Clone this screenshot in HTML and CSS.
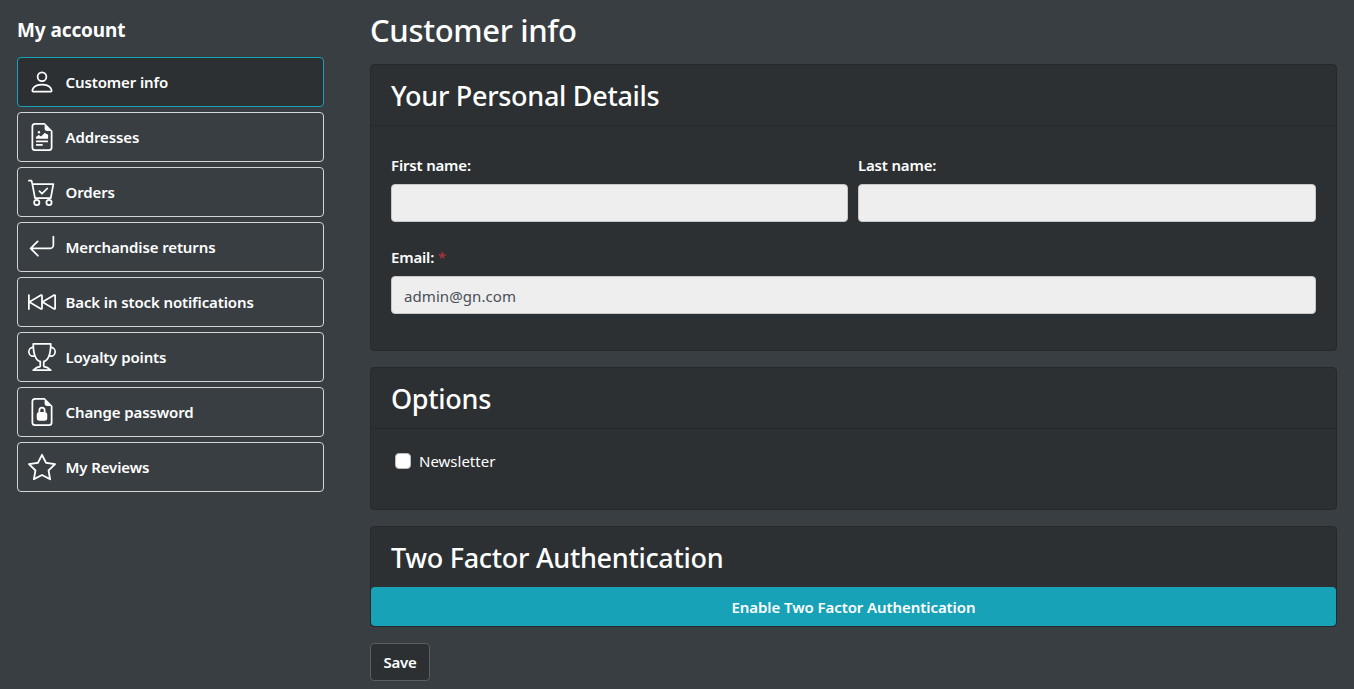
FILE: index.html
```html
<!DOCTYPE html>
<html lang="en">
<head>
<meta charset="utf-8">
<title>Customer info</title>
<link rel="stylesheet" href="styles.css">
</head>
<body>
<div class="page">
  <aside class="side">
    <div class="side-title">My account</div>
    <nav class="menu">
      <a class="item active"><svg class="ico" viewBox="0 0 16 16"><path d="M8 8a3 3 0 1 0 0-6 3 3 0 0 0 0 6zm2-3a2 2 0 1 1-4 0 2 2 0 0 1 4 0zm4 8c0 1-1 1-1 1H3s-1 0-1-1 1-4 6-4 6 3 6 4zm-1-.004c-.001-.246-.154-.986-.832-1.664C11.516 10.68 10.289 10 8 10c-2.29 0-3.516.68-4.168 1.332-.678.678-.83 1.418-.832 1.664h10z"/></svg><span>Customer info</span></a>
      <a class="item"><svg class="ico" viewBox="0 0 16 16"><path d="M14 4.5V14a2 2 0 0 1-2 2H4a2 2 0 0 1-2-2V2a2 2 0 0 1 2-2h5.5L14 4.5zm-3 0A1.5 1.5 0 0 1 9.5 3V1H4a1 1 0 0 0-1 1v12a1 1 0 0 0 1 1h8a1 1 0 0 0 1-1V4.5h-2z"/><path d="M4.5 12.5A.5.5 0 0 1 5 12h3a.5.5 0 0 1 0 1H5a.5.5 0 0 1-.5-.5zm0-2A.5.5 0 0 1 5 10h6a.5.5 0 0 1 0 1H5a.5.5 0 0 1-.5-.5zm1.639-3.708 1.33.886 1.854-1.855a.25.25 0 0 1 .289-.047l1.888.974V8.5a.5.5 0 0 1-.5.5H5a.5.5 0 0 1-.5-.5V8s1.54-1.274 1.639-1.208zM6.25 6a.75.75 0 1 0 0-1.5.75.75 0 0 0 0 1.5z"/></svg><span>Addresses</span></a>
      <a class="item"><svg class="ico" viewBox="0 0 16 16"><path d="M11.354 6.354a.5.5 0 0 0-.708-.708L8 8.293 6.854 7.146a.5.5 0 1 0-.708.708l1.5 1.5a.5.5 0 0 0 .708 0l3-3z"/><path d="M.5 1a.5.5 0 0 0 0 1h1.11l.401 1.607 1.498 7.985A.5.5 0 0 0 4 12h1a2 2 0 1 0 0 4 2 2 0 0 0 0-4h7a2 2 0 1 0 0 4 2 2 0 0 0 0-4h1a.5.5 0 0 0 .491-.408l1.5-8A.5.5 0 0 0 14.5 3H2.89l-.405-1.621A.5.5 0 0 0 2 1H.5zm3.915 10L3.102 4h10.796l-1.313 7h-8.17zM6 14a1 1 0 1 1-2 0 1 1 0 0 1 2 0zm7 0a1 1 0 1 1-2 0 1 1 0 0 1 2 0z"/></svg><span>Orders</span></a>
      <a class="item"><svg class="ico" viewBox="0 0 16 16"><path fill-rule="evenodd" d="M14.5 1.5a.5.5 0 0 1 .5.5v4.8a2.5 2.5 0 0 1-2.5 2.5H2.707l3.347 3.346a.5.5 0 0 1-.708.708l-4.2-4.2a.5.5 0 0 1 0-.708l4-4a.5.5 0 1 1 .708.708L2.707 8.3H12.5A1.5 1.5 0 0 0 14 6.8V2a.5.5 0 0 1 .5-.5z"/></svg><span>Merchandise returns</span></a>
      <a class="item"><svg class="ico" viewBox="0 0 16 16"><path d="M.5 3.5A.5.5 0 0 1 1 4v3.248l6.267-3.636c.52-.302 1.233.043 1.233.696v2.94l6.267-3.636c.52-.302 1.233.043 1.233.696v7.384c0 .653-.713.998-1.233.696L8.5 8.752v2.94c0 .653-.713.998-1.233.696L1 8.752V12a.5.5 0 0 1-1 0V4a.5.5 0 0 1 .5-.5zm7 1.133L1.696 8 7.5 11.367V4.633zm7.5 0L9.196 8 15 11.367V4.633z"/></svg><span>Back in stock notifications</span></a>
      <a class="item"><svg class="ico" viewBox="0 0 16 16"><path d="M2.5.5A.5.5 0 0 1 3 0h10a.5.5 0 0 1 .5.5c0 .538-.012 1.05-.034 1.536a3 3 0 1 1-1.133 5.89c-.79 1.865-1.878 2.777-2.833 3.011v2.173l1.425.356c.194.048.377.135.537.255L13.3 15.1a.5.5 0 0 1-.3.9H3a.5.5 0 0 1-.3-.9l1.838-1.379c.16-.12.343-.207.537-.255L6.5 13.11v-2.173c-.955-.234-2.043-1.146-2.833-3.012a3 3 0 1 1-1.132-5.89A33.076 33.076 0 0 1 2.5.5zm.099 2.54a2 2 0 0 0 .72 3.935c-.333-1.05-.588-2.346-.72-3.935zm10.083 3.935a2 2 0 0 0 .72-3.935c-.133 1.59-.388 2.885-.72 3.935zM3.504 1c.007.517.026 1.006.056 1.469.13 2.028.457 3.546.87 4.667C5.294 9.48 6.484 10 7 10a.5.5 0 0 1 .5.5v2.61a1 1 0 0 1-.757.97l-1.426.356a.5.5 0 0 0-.179.085L4.5 15h7l-.638-.479a.501.501 0 0 0-.18-.085l-1.425-.356a1 1 0 0 1-.757-.97V10.5A.5.5 0 0 1 9 10c.516 0 1.706-.52 2.57-2.864.413-1.12.74-2.64.87-4.667.03-.463.049-.952.056-1.469H3.504z"/></svg><span>Loyalty points</span></a>
      <a class="item"><svg class="ico" viewBox="0 0 16 16"><path d="M10 7v1.076c.54.166 1 .597 1 1.224v2.4c0 .816-.781 1.3-1.5 1.3h-3c-.719 0-1.5-.484-1.5-1.3V9.3c0-.627.46-1.058 1-1.224V7a2 2 0 1 1 4 0zM7 7v1h2V7a1 1 0 0 0-2 0z"/><path d="M14 14V4.5L9.5 0H4a2 2 0 0 0-2 2v12a2 2 0 0 0 2 2h8a2 2 0 0 0 2-2zM9.5 3A1.5 1.5 0 0 0 11 4.5h2V14a1 1 0 0 1-1 1H4a1 1 0 0 1-1-1V2a1 1 0 0 1 1-1h5.5v2z"/></svg><span>Change password</span></a>
      <a class="item"><svg class="ico" viewBox="0 0 16 16"><path d="M2.866 14.85c-.078.444.36.791.746.593l4.39-2.256 4.389 2.256c.386.198.824-.149.746-.592l-.83-4.73 3.522-3.356c.33-.314.16-.888-.282-.95l-4.898-.696L8.465.792a.513.513 0 0 0-.927 0L5.354 5.12l-4.898.696c-.441.062-.612.636-.283.95l3.523 3.356-.83 4.73zm4.905-2.767-3.686 1.894.694-3.957a.565.565 0 0 0-.163-.505L1.71 6.745l4.052-.576a.525.525 0 0 0 .393-.288L8 2.223l1.847 3.658a.525.525 0 0 0 .393.288l4.052.575-2.906 2.77a.565.565 0 0 0-.163.506l.694 3.957-3.686-1.894a.503.503 0 0 0-.461 0z"/></svg><span>My Reviews</span></a>
    </nav>
  </aside>
  <main class="main">
    <h1 class="title">Customer info</h1>
    <section class="card">
      <h2 class="card-head">Your Personal Details</h2>
      <div class="card-body details">
        <div class="row">
          <div class="field"><label class="lbl">First name:</label><input class="inp" type="text"></div>
          <div class="field"><label class="lbl">Last name:</label><input class="inp" type="text"></div>
        </div>
        <div class="field"><label class="lbl">Email: <span class="req">*</span></label><input class="inp" type="text" value="admin@gn.com"></div>
      </div>
    </section>
    <section class="card">
      <h2 class="card-head">Options</h2>
      <div class="card-body options">
        <label class="check"><span class="box"></span>Newsletter</label>
      </div>
    </section>
    <section class="card">
      <h2 class="card-head plain">Two Factor Authentication</h2>
      <button class="enable" type="button">Enable Two Factor Authentication</button>
    </section>
    <button class="save" type="button">Save</button>
  </main>
</div>
</body>
</html>
```

FILE: styles.css
```css
* { box-sizing: border-box; }
html, body { height: 100%; }
body {
  margin: 0;
  background: #393e42;
  color: #fff;
  font-family: "Noto Sans", "Open Sans", sans-serif;
  font-size: 15px;
  overflow: hidden;
}
.page { display: flex; padding-left: 17px; }
.side { width: 307px; flex: none; padding-top: 17px; }
.side-title { font-size: 19px; font-weight: 700; line-height: 26px; margin-bottom: 14px; letter-spacing: -0.1px; }
.menu { display: flex; flex-direction: column; gap: 5px; }
.item {
  display: flex; align-items: center; height: 50px;
  border: 1px solid #d4d5d6; border-radius: 4px;
  padding-left: 10px; gap: 9.5px;
  font-size: 15px; font-weight: 600; letter-spacing: -0.12px;
}
.item.active { background: #2c3033; border-color: #17a2b8; }
.ico { width: 28px; height: 28px; fill: #fff; flex: none; }
.main { width: 967px; margin-left: 46px; flex: none; }
.title { margin: 8px 0 0; height: 56px; font-size: 31px; font-weight: 500; line-height: 44px; letter-spacing: -0.35px; }
.card {
  background: #2c3033; border: 1px solid #26292c; border-radius: 4px;
  margin-bottom: 16px; overflow: hidden;
}
.card-head {
  margin: 0; padding-left: 20px; height: 61px; line-height: 61px;
  font-size: 27px; font-weight: 500; letter-spacing: -0.3px;
  border-bottom: 1px solid #26292c; box-sizing: content-box; height: 60px;
}
.card-head.plain { border-bottom: 0; }
.card-body { padding: 27px 20px 36px; }
.options { padding: 20px 20px 36px; }
.row { display: grid; grid-template-columns: 457px 458px; gap: 10px; margin-bottom: 23px; }
.lbl { display: block; font-size: 15px; font-weight: 600; line-height: 24px; margin-bottom: 7px; letter-spacing: -0.18px; }
.req { color: #b8323d; font-weight: 400; }
.inp {
  display: block; width: 100%; height: 38px;
  background: #eee; border: 1px solid #c5c8cb; border-radius: 4px;
  padding: 2px 12px 0; color: #495057;
  font-family: "Noto Sans", sans-serif; font-size: 15px; letter-spacing: 0.08px;
}
.check { display: flex; align-items: center; gap: 8px; line-height: 24px; padding-left: 4px; font-size: 15px; }
.box { width: 16px; height: 16px; background: #fff; border: 1px solid #bbb; border-radius: 4px; flex: none; }
.enable {
  display: block; width: 100%; height: 39px; margin: 0;
  background: #17a2b8; color: #fff; border: 0; border-radius: 4px;
  font-family: "Noto Sans", sans-serif; font-size: 15px; font-weight: 600; letter-spacing: -0.08px;
}
.save {
  display: block; width: 60px; height: 38px; padding: 0;
  background: #2c3033; color: #fff; border: 1px solid #5b5f63; border-radius: 4px;
  font-family: "Noto Sans", sans-serif; font-size: 15px; font-weight: 600; letter-spacing: -0.2px;
}
```
